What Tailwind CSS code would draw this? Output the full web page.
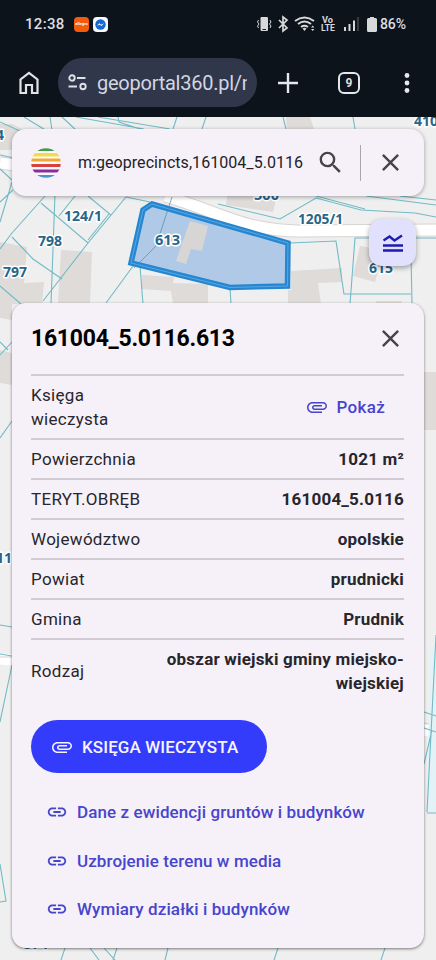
<!DOCTYPE html>
<html lang="pl">
<head>
<meta charset="utf-8">
<meta name="viewport" content="width=device-width, initial-scale=1">
<title>Geoportal360</title>
<script src="https://cdn.jsdelivr.net/npm/@tailwindcss/browser@4"></script>
</head>
<body class="h-[960px] w-[436px] overflow-hidden bg-[#efeff0] font-['Roboto',sans-serif]">
<div class="relative flex h-full flex-col">

<!-- Cadastral map -->
<svg class="absolute inset-0" width="436" height="960" viewBox="0 0 436 960" fill="none">
  <rect width="436" height="960" fill="#efeff0"/>
  <g fill="#dedbd9">
    <path d="M0 124 12 124 26 131V150H0ZM286 117H310L314 129H287ZM61 250 92 252 90 304H58ZM0 242 27 247 24 283 44 282 42 304H0ZM142 275 174 277 173 283 208 284V304H173L171 291 141 289ZM228 190 277 196 273 212 226 205ZM360 246 384 250 375 282 353 276ZM291 271 342 268V282L318 283 321 304H288V290H291ZM376 301H402V304H376ZM424 372H436V430H424ZM0 303H12V320L0 318ZM0 350 12 353V385L0 383Z"/>
  </g>
  <path d="M0 163 14 165M165 196C220 212 245 231 300 231L436 230" stroke="#d9d4d1" stroke-width="13"/>
  <path d="M0 163 14 165M165 196C220 212 245 231 300 231L436 230M0 659 12 660M424 730 436 732" stroke="#fff" stroke-width="11"/>
  <path d="M0 657H12M424 723 436 725" stroke="#d5d0cc" stroke-width="1"/>
  <path d="M430 650H436V812H427Z" fill="#e3f2f6"/>
  <g stroke="#72bac5" stroke-width="1.1">
    <path d="M24 117 47 131M0 122 22 132M50 117 52 130M62 117 76 130M76 117 144 129M98 117 170 129M118 117 119 122 140 129M177 117 173 129M206 117 202 129M283 117 286 129M353 117 355 129M0 155 14 158M0 169 12 180M12 182 0 222M13 190 0 202"/>
    <path d="M45 196 12 233 0 249M55 194 51 304M41 203 88 243 111 215 88 196M75 196 59 216M126 197 88 243 43 301M88 240 109 214M12 237 33 259 62 279M0 286 21 304M126 197 150 202M136 262 106 303M140 266 143 304"/>
    <path d="M218 204 280 219 316 198 361 210 415 213 436 217M316 196 365 209M366 196 436 205M400 196 436 200M290 243 336 241 344 294 411 294M436 238H355L350 304M411 254 412 304M230 288 231 304"/>
    <path d="M12 342 0 355M0 342 8 350M12 421 0 438M0 625 12 627M0 654 12 656M12 665 0 722M0 864 6 901 0 902M424 712 436 716M424 728 436 732M436 635 427 812M432 730 424 764M427 813H436M65 948 61 960M90 948 99 960M104 948 115 960M117 948 113 960M168 948 165 960M278 948 274 960M385 948 381 960"/>
  </g>
  <path d="M152 204 288 243 287.500 286 230 287.500 131 263 143 210Z" fill="#2878d0" fill-opacity=".32"/>
  <path d="M190 221 208 226 202 251 191 249 186 264 176 261Z" fill="#d8d5d5"/>
  <path d="M152 204 288 243 287.500 286 230 287.500 131 263 143 210Z" stroke="#2686d0" stroke-width="5.500"/>
  <path d="M152 204 288 243 287.500 286 230 287.500 131 263 143 210Z" stroke="#55a9e7" stroke-width="1"/>
  <path d="M172 197 156 246 134 268" stroke="#3c87b2" stroke-opacity=".65"/>
  <g class="font-['Noto_Sans','Open_Sans',sans-serif]" font-size="14" font-weight="700" fill="#276589" stroke="#fff" stroke-width="3" stroke-linejoin="round" paint-order="stroke">
    <text x="64" y="221" textLength="38" lengthAdjust="spacingAndGlyphs">124/1</text>
    <text x="38" y="246" textLength="24" lengthAdjust="spacingAndGlyphs">798</text>
    <text x="3" y="277" textLength="24" lengthAdjust="spacingAndGlyphs">797</text>
    <text x="155" y="245" textLength="25" lengthAdjust="spacingAndGlyphs">613</text>
    <text x="298" y="224" textLength="45" lengthAdjust="spacingAndGlyphs">1205/1</text>
    <text x="254" y="200" textLength="25" lengthAdjust="spacingAndGlyphs">500</text>
    <text x="369" y="273" textLength="24" lengthAdjust="spacingAndGlyphs">615</text>
    <text x="414" y="126" textLength="24" lengthAdjust="spacingAndGlyphs">410</text>
    <text x="-4" y="140">4</text>
    <text x="-4" y="563" textLength="16" lengthAdjust="spacingAndGlyphs">11</text>
    <text x="24" y="949" textLength="24" lengthAdjust="spacingAndGlyphs">574</text>
  </g>
</svg>

<!-- Status bar and browser toolbar -->
<header class="relative h-[117px] shrink-0 bg-[#0d131b] text-[#dcdde1]">
  <div class="flex h-12 items-center pl-[25px] pr-[29px]">
    <span class="w-[49px] text-[15px] font-medium tracking-[0.3px]">12:38</span>
    <div class="flex h-[15px] w-[15px] items-center justify-center rounded-[4px] bg-[#f45b0b] text-[4px] font-bold text-white">allegro</div>
    <div class="ml-[4px] flex h-[15px] w-[15px] items-center justify-center rounded-[4px] bg-[#f5f8fd]">
      <svg width="11" height="11" viewBox="0 0 11 11"><circle cx="5.500" cy="5.500" r="5.200" fill="#1769d2"/><path d="M2 6.800 4.500 4.300 6 5.700 9 4.200 6.500 6.900 4.900 5.700Z" fill="#fff"/></svg>
    </div>
    <div class="ml-auto flex items-center">
      <svg width="108" height="18" viewBox="256 15 108 18" fill="none" stroke="#d6d8d9" stroke-width="1.400">
        <rect x="260.500" y="17" width="7.500" height="14" rx="1.200" fill="#d6d8d9" stroke="none"/><path d="M262.500 29.500H266" stroke="#18202a" stroke-width="1"/>
        <path d="M258.500 20 257.500 22 259 24 257.500 26 258.500 28M270 20 271 22 269.500 24 271 26 270 28" stroke-width="1"/>
        <path d="M279 20 287 28 283 31V17L287 20 279 28" stroke-width="1.700"/>
        <path d="M295 21Q304.500 14 314 21M298 24Q304.500 19 311 24M301 27Q304.500 24.500 308 27" stroke-width="2"/>
        <path d="M302.500 28.500Q304.500 27 306.500 28.500L304.500 31ZM311 27.500 312.700 25.500 314.400 27.500ZM311 29 312.700 31 314.400 29Z" fill="#d6d8d9" stroke="none"/>
        <g fill="#d6d8d9" stroke="none" font-size="8.500" font-weight="700"><text x="322" y="23" textLength="11" lengthAdjust="spacingAndGlyphs">Vo</text><text x="321" y="31" textLength="14" lengthAdjust="spacingAndGlyphs">LTE</text></g>
        <path d="M345 31V27M349.500 31V24M354 31V20.500" stroke-width="2"/><path d="M358 31V17" stroke="#343b43" stroke-width="2"/>
      </svg>
      <svg class="ml-[3px]" width="10" height="15" viewBox="0 0 10 15"><path d="M3 0H7V1H8.500Q10 1 10 2.500V13.500Q10 15 8.500 15H1.500Q0 15 0 13.500V2.500Q0 1 1.500 1H3Z" fill="#d6d8d9"/></svg>
      <span class="ml-[3px] w-[27px] text-[14px] font-medium tracking-[-0.1px]">86%</span>
    </div>
  </div>
  <div class="flex h-[69px] items-center pl-[16px]">
    <svg width="26" height="28" viewBox="0 0 26 28" fill="none" stroke="#e1e3ea" stroke-width="2.200"><path d="M4.500 24V10.500L13 4 21.500 10.500V24H16V16H10V24Z"/></svg>
    <div class="ml-[16px] flex h-[49px] w-[199px] items-center overflow-hidden rounded-full bg-[#31374a] pl-[10px]">
      <svg width="19" height="17" viewBox="0 0 19 17" fill="none" stroke="#dfe1e9" stroke-width="1.900"><circle cx="4" cy="4" r="2.700"/><path d="M9 4H17.500M0.500 12.500H9"/><circle cx="15" cy="12.500" r="2.700"/></svg>
      <div class="ml-[10px] w-[150px] overflow-hidden whitespace-nowrap text-[20px] tracking-[-0.25px] text-[#d3d6e1]">geoportal360.pl/m</div>
    </div>
    <svg class="ml-[21px]" width="20" height="20" viewBox="0 0 20 20" stroke="#e5e7ee" stroke-width="2.400"><path d="M10 0V20M0 10H20"/></svg>
    <div class="ml-[40px] flex h-[22px] w-[22px] items-center justify-center rounded-[6px] border-2 border-[#e5e7ee] text-[12px] font-bold">9</div>
    <svg class="ml-[44px]" width="6" height="20" viewBox="0 0 6 20" fill="#e5e7ee"><circle cx="3" cy="2.500" r="2.400"/><circle cx="3" cy="10" r="2.400"/><circle cx="3" cy="17.500" r="2.400"/></svg>
  </div>
</header>

<!-- Search bar -->
<div class="relative mx-3 mt-[12px] flex h-[67px] shrink-0 items-center rounded-[14px] bg-[#f6f1f8] pl-[19px] shadow-[0_1px_4px_rgba(0,0,0,0.35)]">
  <svg width="30" height="30" viewBox="0 0 30 30"><clipPath id="globe"><circle cx="15" cy="15" r="14.800"/></clipPath><g clip-path="url(#globe)"><path fill="#fbf8fa" d="M0 0H30V30H0Z"/><path fill="#439c4a" d="M0 0H30V3H0Z"/><path fill="#f4db4e" d="M0 5H30V8.500H0Z"/><path fill="#edaa34" d="M0 10.500H30V13.500H0Z"/><path fill="#d94140" d="M0 16H30V19H0Z"/><path fill="#8b2ba0" d="M0 21.500H30V24.500H0Z"/><path fill="#4495d0" d="M0 27H30V30H0Z"/></g></svg>
  <span class="ml-[17px] w-[226px] whitespace-nowrap text-[16px] tracking-[0.05px] text-[#232127]">m:geoprecincts,161004_5.0116</span>
  <svg class="ml-[12px]" width="29" height="29" viewBox="0 0 24 24" fill="#46434b"><path d="M15.500 14h-.79l-.28-.27A6.471 6.471 0 0 0 16 9.500 6.500 6.500 0 1 0 9.500 16c1.610 0 3.090-.59 4.230-1.570l.27.28v.79l5 4.990L20.490 19l-4.990-5zm-6 0C7.010 14 5 11.990 5 9.500S7.010 5 9.500 5 14 7.010 14 9.500 11.990 14 9.500 14z"/></svg>
  <div class="ml-[15px] h-[36px] w-px bg-[#aaa6ad]"></div>
  <svg class="mb-px ml-[15px]" width="29" height="29" viewBox="0 0 24 24" fill="#46434b"><path d="M19 6.410 17.590 5 12 10.590 6.410 5 5 6.410 10.590 12 5 17.590 6.410 19 12 13.410 17.590 19 19 17.590 13.410 12z"/></svg>
</div>

<!-- Measure button -->
<button class="absolute left-[369px] top-[219px] flex h-[47px] w-[47px] items-center justify-center rounded-[13px] bg-[#e1e0fd] shadow-[0_2px_5px_rgba(0,0,0,0.35)]" aria-label="Pomiar">
  <svg width="22" height="20" viewBox="0 0 22 20" fill="none" stroke="#1d1bb0" stroke-width="2.300"><path d="M1 12.500H21M1 17.500H21M1.500 7.500 7.500 3.500 12.500 7.500 20 2.500"/></svg>
</button>

<!-- Parcel details -->
<main class="relative mx-3 mt-[107px] flex h-[645px] shrink-0 flex-col rounded-[14px] bg-[#f6f1f8] px-[19px] text-[17px] leading-6 tracking-[0.3px] text-[#28262c] shadow-[0_1px_3px_rgba(0,0,0,0.5)]">
  <div class="flex h-[71px] items-center justify-between">
    <h1 class="text-[23px] font-bold tracking-[-0.27px] text-black">161004_5.0116.613</h1>
    <svg class="mb-px" width="29" height="29" viewBox="0 0 24 24" fill="#46434b"><path d="M19 6.410 17.590 5 12 10.590 6.410 5 5 6.410 10.590 12 5 17.590 6.410 19 12 13.410 17.590 19 19 17.590 13.410 12z"/></svg>
  </div>
  <dl class="w-[373px]">
    <div class="flex h-[64px] items-center justify-between border-t-2 border-[#d0cbd2]"><dt class="w-[110px]">Księga wieczysta</dt><dd class="mr-[19px] flex items-center font-medium text-[#4645cc]"><svg class="mr-[8px]" width="24" height="24" viewBox="0 0 24 24" fill="currentColor"><path d="M2 12.500C2 9.460 4.460 7 7.500 7H18c2.210 0 4 1.790 4 4s-1.790 4-4 4H9.500C8.120 15 7 13.880 7 12.500S8.120 10 9.500 10H17v1.500H9.410c-1.100 0-1.100 2 0 2H18c1.380 0 2.500-1.120 2.500-2.500S19.380 8.500 18 8.500H7.500c-2.210 0-4 1.790-4 4s1.790 4 4 4H17V18H7.500C4.460 18 2 15.540 2 12.500z"/></svg>Pokaż</dd></div>
    <div class="flex h-[40px] items-center justify-between border-t-2 border-[#d0cbd2]"><dt>Powierzchnia</dt><dd class="font-bold tracking-[0.2px]">1021 m²</dd></div>
    <div class="flex h-[40px] items-center justify-between border-t-2 border-[#d0cbd2]"><dt>TERYT.OBRĘB</dt><dd class="font-bold tracking-[0.2px]">161004_5.0116</dd></div>
    <div class="flex h-[40px] items-center justify-between border-t-2 border-[#d0cbd2]"><dt>Województwo</dt><dd class="font-bold tracking-[0.2px]">opolskie</dd></div>
    <div class="flex h-[40px] items-center justify-between border-t-2 border-[#d0cbd2]"><dt>Powiat</dt><dd class="font-bold tracking-[0.2px]">prudnicki</dd></div>
    <div class="flex h-[40px] items-center justify-between border-t-2 border-[#d0cbd2]"><dt>Gmina</dt><dd class="font-bold tracking-[0.2px]">Prudnik</dd></div>
    <div class="flex h-[64px] items-center justify-between border-t-2 border-[#d0cbd2]"><dt>Rodzaj</dt><dd class="whitespace-nowrap text-right font-bold tracking-[0.2px]">obszar wiejski gminy miejsko-<br>wiejskiej</dd></div>
  </dl>
  <button class="mt-[18px] flex h-[53px] w-[236px] shrink-0 items-center rounded-full bg-[#343cfb] pl-[19px] text-[17px] font-medium tracking-[0.1px] text-[#f6f5ff]">
    <svg class="mr-[8px]" width="24" height="24" viewBox="0 0 24 24" fill="currentColor"><path d="M2 12.500C2 9.460 4.460 7 7.500 7H18c2.210 0 4 1.790 4 4s-1.790 4-4 4H9.500C8.120 15 7 13.880 7 12.500S8.120 10 9.500 10H17v1.500H9.410c-1.100 0-1.100 2 0 2H18c1.380 0 2.500-1.120 2.500-2.500S19.380 8.500 18 8.500H7.500c-2.210 0-4 1.790-4 4s1.790 4 4 4H17V18H7.500C4.460 18 2 15.540 2 12.500z"/></svg>KSIĘGA WIECZYSTA</button>
  <nav class="mt-[15px] flex flex-col pl-[15px] font-medium tracking-[0.1px] text-[#4645cc]">
    <a class="flex h-[48.500px] items-center gap-[9px]"><svg width="22" height="22" viewBox="0 0 24 24" fill="currentColor"><path d="M3.900 12c0-1.710 1.390-3.100 3.100-3.100h4V7H7c-2.760 0-5 2.240-5 5s2.240 5 5 5h4v-1.900H7c-1.710 0-3.100-1.390-3.100-3.100zM8 13h8v-2H8v2zm9-6h-4v1.900h4c1.710 0 3.100 1.390 3.100 3.100s-1.390 3.100-3.100 3.100h-4V17h4c2.760 0 5-2.240 5-5s-2.240-5-5-5z"/></svg><span>Dane z ewidencji gruntów i budynków</span></a>
    <a class="flex h-[48.500px] items-center gap-[9px]"><svg width="22" height="22" viewBox="0 0 24 24" fill="currentColor"><path d="M3.900 12c0-1.710 1.390-3.100 3.100-3.100h4V7H7c-2.760 0-5 2.240-5 5s2.240 5 5 5h4v-1.900H7c-1.710 0-3.100-1.390-3.100-3.100zM8 13h8v-2H8v2zm9-6h-4v1.900h4c1.710 0 3.100 1.390 3.100 3.100s-1.390 3.100-3.100 3.100h-4V17h4c2.760 0 5-2.240 5-5s-2.240-5-5-5z"/></svg><span>Uzbrojenie terenu w media</span></a>
    <a class="flex h-[48.500px] items-center gap-[9px]"><svg width="22" height="22" viewBox="0 0 24 24" fill="currentColor"><path d="M3.900 12c0-1.710 1.390-3.100 3.100-3.100h4V7H7c-2.760 0-5 2.240-5 5s2.240 5 5 5h4v-1.900H7c-1.710 0-3.100-1.390-3.100-3.100zM8 13h8v-2H8v2zm9-6h-4v1.900h4c1.710 0 3.100 1.390 3.100 3.100s-1.390 3.100-3.100 3.100h-4V17h4c2.760 0 5-2.240 5-5s-2.240-5-5-5z"/></svg><span>Wymiary działki i budynków</span></a>
  </nav>
</main>
</div>
</body>
</html>
